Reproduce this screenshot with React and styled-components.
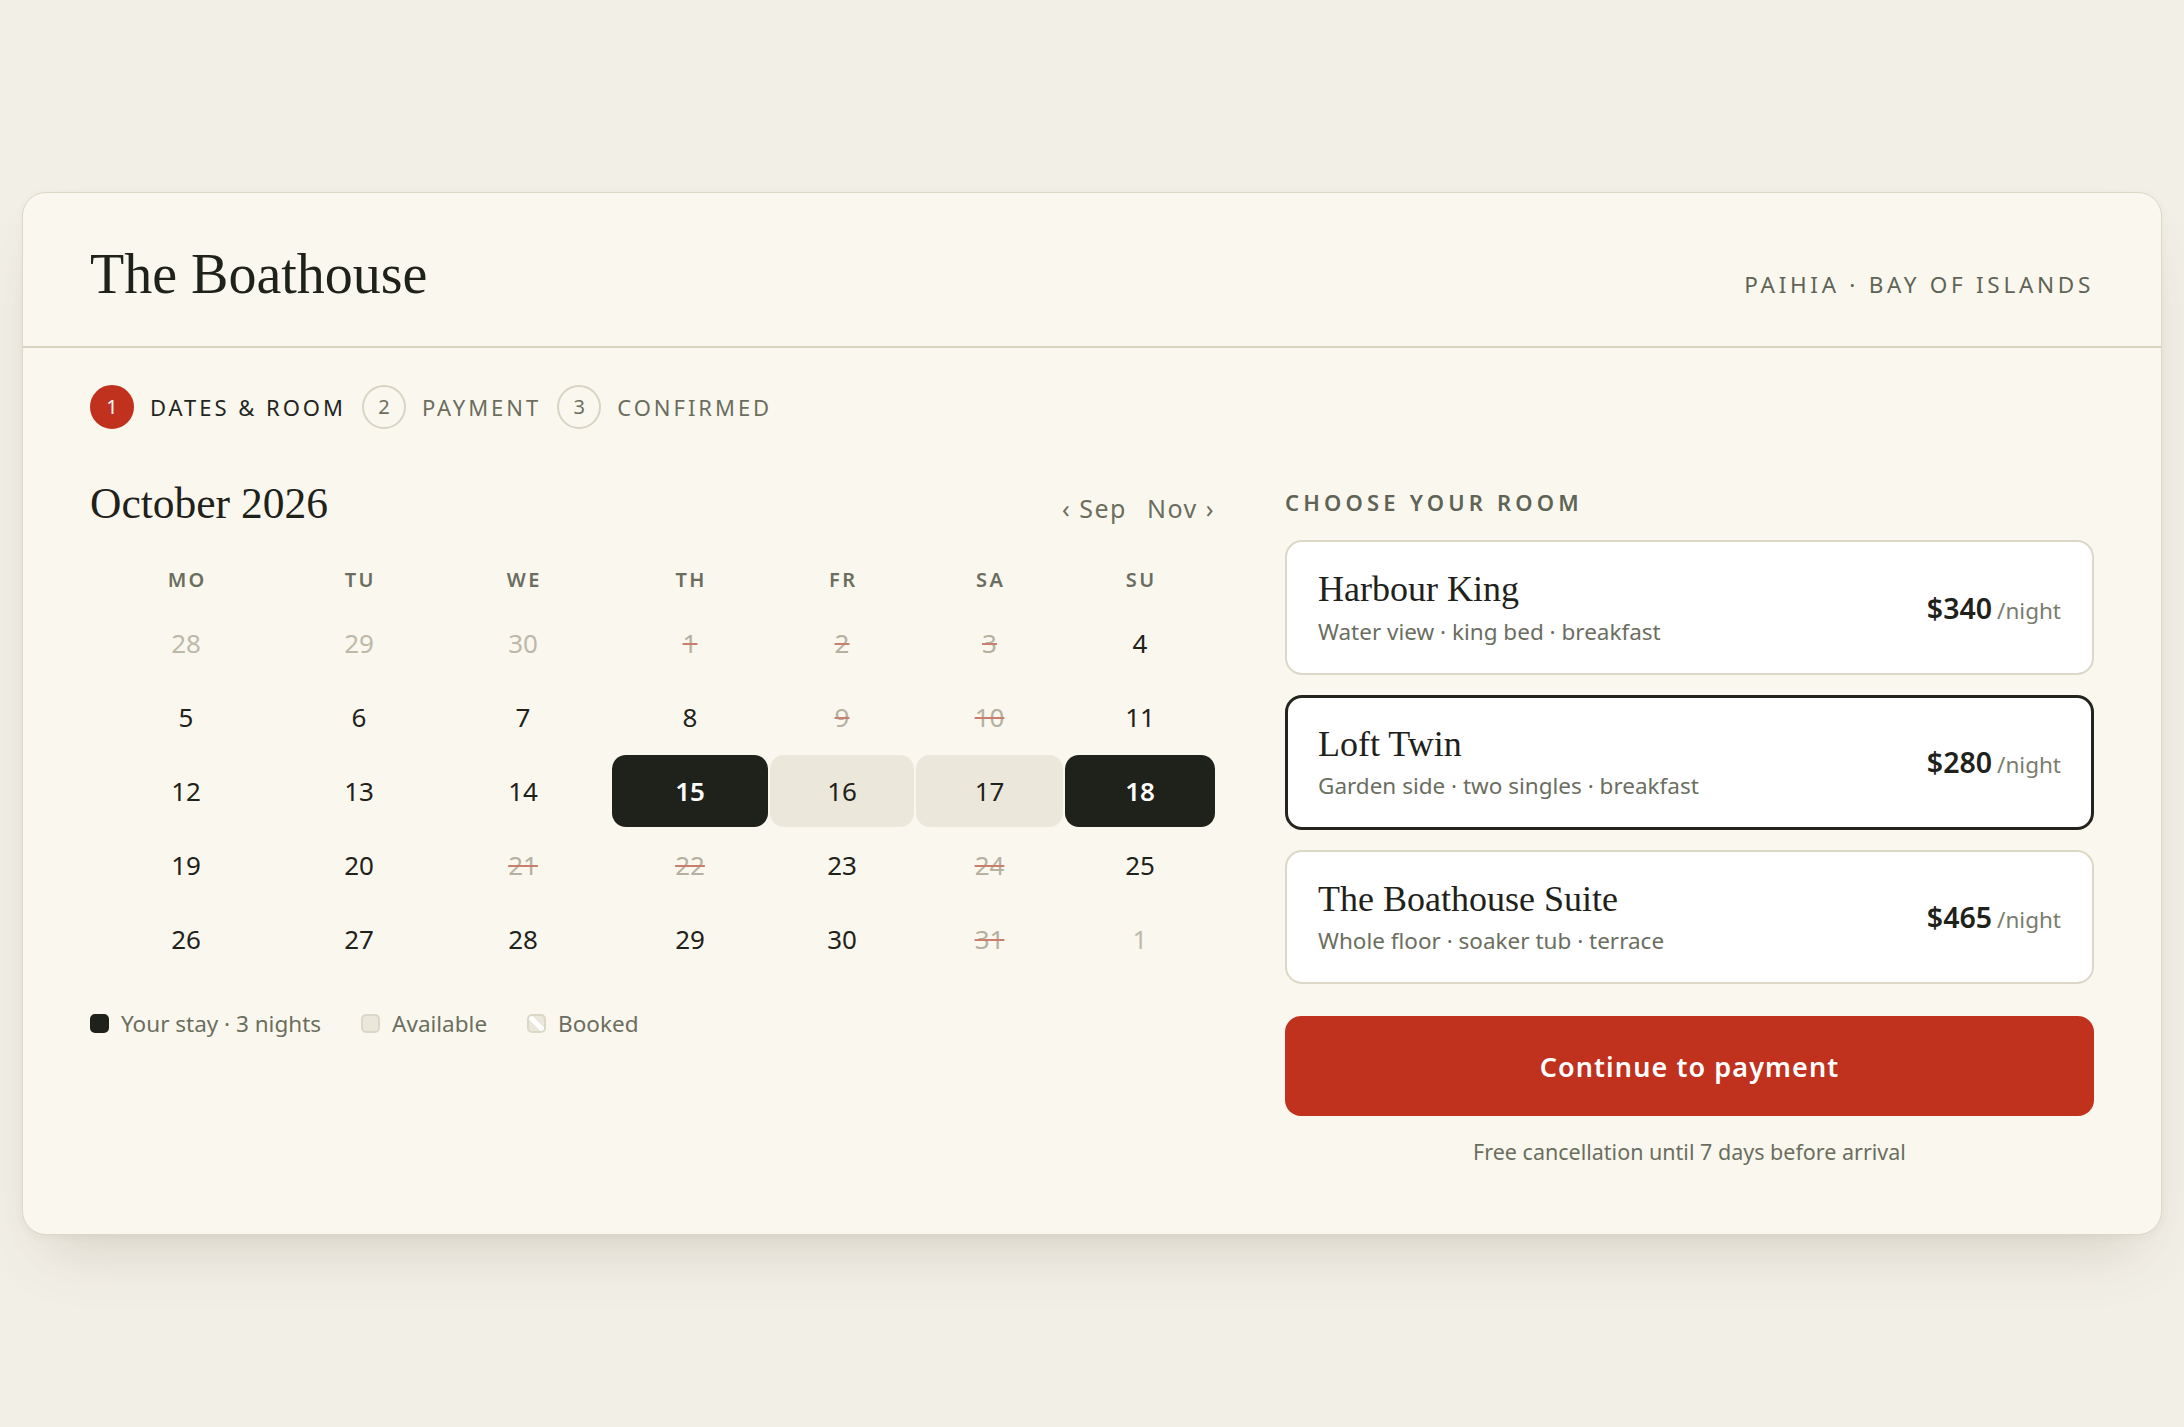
import React from "react";
import styled, { createGlobalStyle, css } from "styled-components";

const SANS = `"Noto Sans", "Open Sans", sans-serif`;
const SERIF = `"Liberation Serif", "Times New Roman", serif`;

const GlobalStyle = createGlobalStyle`
  *, *::before, *::after { box-sizing: border-box; }
  html, body { margin: 0; padding: 0; }
  body {
    background: #f2efe7;
    font-family: ${SANS};
    color: #1f211b;
  }
`;

const Shell = styled.main`
  min-height: 100vh;
  display: flex;
  align-items: center;
  justify-content: center;
  padding: 0 22px;
`;

const Card = styled.section`
  width: 100%;
  background: #faf8ee;
  border: 1px solid #dcd8c6;
  border-radius: 24px;
  box-shadow: 0 34px 60px -24px rgba(90, 80, 50, 0.2), 0 2px 8px rgba(90, 80, 50, 0.05);
`;

const Header = styled.header`
  display: flex;
  justify-content: space-between;
  align-items: baseline;
  padding: 48px 67px 37px;
  border-bottom: 2px solid #d8d4c1;
`;

const Title = styled.h1`
  margin: 0;
  font-family: ${SERIF};
  font-weight: 400;
  font-size: 56px;
  line-height: 1.2;
  color: #1f211b;
`;

const Location = styled.div`
  font-size: 22.5px;
  letter-spacing: 0.165em;
  color: #5f6456;
  text-transform: uppercase;
`;

const Body = styled.div`
  padding: 37px 67px 66px;
`;

const Stepper = styled.ol`
  display: flex;
  align-items: center;
  list-style: none;
  margin: 0;
  padding: 0;
`;

const Step = styled.li`
  display: flex;
  align-items: center;
  gap: 16px;
  margin-right: 16px;
  font-size: 22px;
  letter-spacing: 0.135em;
  text-transform: uppercase;
  color: ${(p) => (p.$active ? "#23251f" : "#6b6e5f")};
`;

const StepNum = styled.span`
  width: 44px;
  height: 44px;
  flex: none;
  border-radius: 50%;
  display: flex;
  align-items: center;
  justify-content: center;
  font-size: 20px;
  letter-spacing: 0;
  border: 2px solid ${(p) => (p.$active ? "#c0311e" : "#d8d4c4")};
  background: ${(p) => (p.$active ? "#c0311e" : "transparent")};
  color: ${(p) => (p.$active ? "#ffffff" : "#6b6e5f")};
`;

const Main = styled.div`
  display: grid;
  grid-template-columns: minmax(0, 1125fr) minmax(0, 809fr);
  column-gap: 70px;
  margin-top: 48px;
  align-items: start;
`;

const CalendarCol = styled.div`
  display: flex;
  flex-direction: column;
`;

const MonthBar = styled.div`
  display: flex;
  justify-content: space-between;
  align-items: baseline;
`;

const MonthTitle = styled.h2`
  margin: 0;
  font-family: ${SERIF};
  font-weight: 400;
  font-size: 43.5px;
  line-height: 1.2;
  color: #1f211b;
`;

const MonthNav = styled.div`
  display: flex;
  gap: 20px;
`;

const NavButton = styled.button`
  background: none;
  border: 0;
  padding: 0;
  font-family: ${SANS};
  font-size: 25px;
  letter-spacing: 0.06em;
  color: #6b6e5f;
  cursor: pointer;
`;

const CalGrid = styled.div`
  display: grid;
  grid-template-columns: 192fr 150fr 174fr 156fr 144fr 147fr 150fr;
  gap: 2px;
  margin-top: 26px;
`;

const DayName = styled.div`
  height: 50px;
  display: flex;
  align-items: center;
  justify-content: center;
  padding-left: 0.12em;
  font-size: 20px;
  font-weight: 600;
  letter-spacing: 0.12em;
  color: #6b6e5f;
`;

const dayVariants = {
  muted: css`
    color: #bdb8a9;
  `,
  booked: css`
    color: #b5b0a2;
    text-decoration: line-through;
    text-decoration-color: #c97f6d;
    text-decoration-thickness: 2px;
  `,
  open: css`
    color: #1f211b;
  `,
  edge: css`
    background: #1f211b;
    color: #ffffff;
    font-weight: 600;
  `,
  range: css`
    background: #ebe7da;
    color: #1f211b;
  `,
};

const DayCell = styled.div`
  height: 72px;
  display: flex;
  align-items: center;
  justify-content: center;
  border-radius: 14px;
  font-size: 26px;
  ${(p) => dayVariants[p.$kind]}
`;

const Legend = styled.div`
  display: flex;
  align-items: center;
  gap: 40px;
  margin-top: 33px;
  font-size: 22.5px;
  line-height: 1.4;
  color: #6b6e5f;
`;

const LegendItem = styled.span`
  display: flex;
  align-items: center;
  gap: 12px;
`;

const swatches = {
  stay: css`
    background: #1f211b;
    border: 2px solid #1f211b;
  `,
  available: css`
    background: #ebe7da;
    border: 2px solid #dcd8c8;
  `,
  booked: css`
    background: linear-gradient(45deg, #ebe7da 38%, #ffffff 38% 62%, #ebe7da 62%);
    border: 2px solid #dcd8c8;
  `,
};

const Swatch = styled.span`
  width: 19px;
  height: 19px;
  border-radius: 5px;
  flex: none;
  ${(p) => swatches[p.$kind]}
`;

const RoomCol = styled.div`
  display: flex;
  flex-direction: column;
`;

const RoomLabel = styled.h3`
  margin: 10px 0 0;
  font-size: 22px;
  font-weight: 600;
  line-height: 1.4;
  letter-spacing: 0.19em;
  text-transform: uppercase;
  color: #5f6456;
`;

const RoomList = styled.div`
  display: flex;
  flex-direction: column;
  gap: 20px;
  margin-top: 23px;
`;

const RoomCard = styled.button`
  display: flex;
  justify-content: space-between;
  align-items: center;
  width: 100%;
  text-align: left;
  background: #ffffff;
  border-radius: 17px;
  cursor: pointer;
  font-family: ${SANS};
  border: 2px solid #dcd8c8;
  padding: 26px 31px;
  ${(p) =>
    p.$selected &&
    css`
      border: 3px solid #23241e;
      padding: 25px 30px;
    `}
`;

const RoomInfo = styled.div`
  display: flex;
  flex-direction: column;
  gap: 4px;
`;

const RoomName = styled.div`
  font-family: ${SERIF};
  font-size: 36px;
  line-height: 1.2;
  color: #1f211b;
`;

const RoomMeta = styled.div`
  font-size: 22.5px;
  line-height: 1.4;
  color: #6b6e5f;
`;

const Price = styled.div`
  display: flex;
  align-items: baseline;
  gap: 5px;
`;

const Amount = styled.span`
  font-size: 28.5px;
  font-weight: 600;
  color: #1f211b;
`;

const PerNight = styled.span`
  font-size: 22.5px;
  color: #7a7c6e;
`;

const PrimaryButton = styled.button`
  margin-top: 32px;
  height: 100px;
  width: 100%;
  border: 0;
  border-radius: 16px;
  background: #c0311e;
  color: #ffffff;
  font-family: ${SANS};
  font-size: 27px;
  font-weight: 600;
  letter-spacing: 0.04em;
  cursor: pointer;
`;

const Note = styled.p`
  margin: 21px 0 0;
  text-align: center;
  font-size: 21.5px;
  line-height: 1.4;
  color: #6b6e5f;
`;

const DAY_NAMES = ["MO", "TU", "WE", "TH", "FR", "SA", "SU"];

const WEEKS = [
  [["28", "muted"], ["29", "muted"], ["30", "muted"], ["1", "booked"], ["2", "booked"], ["3", "booked"], ["4", "open"]],
  [["5", "open"], ["6", "open"], ["7", "open"], ["8", "open"], ["9", "booked"], ["10", "booked"], ["11", "open"]],
  [["12", "open"], ["13", "open"], ["14", "open"], ["15", "edge"], ["16", "range"], ["17", "range"], ["18", "edge"]],
  [["19", "open"], ["20", "open"], ["21", "booked"], ["22", "booked"], ["23", "open"], ["24", "booked"], ["25", "open"]],
  [["26", "open"], ["27", "open"], ["28", "open"], ["29", "open"], ["30", "open"], ["31", "booked"], ["1", "muted"]],
];

const ROOMS = [
  { name: "Harbour King", meta: "Water view · king bed · breakfast", price: "$340" },
  { name: "Loft Twin", meta: "Garden side · two singles · breakfast", price: "$280", selected: true },
  { name: "The Boathouse Suite", meta: "Whole floor · soaker tub · terrace", price: "$465" },
];

const STEPS = [
  { n: 1, label: "Dates & Room", active: true },
  { n: 2, label: "Payment" },
  { n: 3, label: "Confirmed" },
];

export default function App() {
  return (
    <>
      <GlobalStyle />
      <Shell>
        <Card>
          <Header>
            <Title>The Boathouse</Title>
            <Location>Paihia · Bay of Islands</Location>
          </Header>
          <Body>
            <Stepper>
              {STEPS.map((s) => (
                <Step key={s.n} $active={s.active}>
                  <StepNum $active={s.active}>{s.n}</StepNum>
                  {s.label}
                </Step>
              ))}
            </Stepper>
            <Main>
              <CalendarCol>
                <MonthBar>
                  <MonthTitle>October 2026</MonthTitle>
                  <MonthNav>
                    <NavButton>‹ Sep</NavButton>
                    <NavButton>Nov ›</NavButton>
                  </MonthNav>
                </MonthBar>
                <CalGrid>
                  {DAY_NAMES.map((d) => (
                    <DayName key={d}>{d}</DayName>
                  ))}
                  {WEEKS.flat().map(([day, kind], i) => (
                    <DayCell key={i} $kind={kind}>
                      {day}
                    </DayCell>
                  ))}
                </CalGrid>
                <Legend>
                  <LegendItem>
                    <Swatch $kind="stay" />
                    Your stay · 3 nights
                  </LegendItem>
                  <LegendItem>
                    <Swatch $kind="available" />
                    Available
                  </LegendItem>
                  <LegendItem>
                    <Swatch $kind="booked" />
                    Booked
                  </LegendItem>
                </Legend>
              </CalendarCol>
              <RoomCol>
                <RoomLabel>Choose your room</RoomLabel>
                <RoomList>
                  {ROOMS.map((r) => (
                    <RoomCard key={r.name} $selected={r.selected}>
                      <RoomInfo>
                        <RoomName>{r.name}</RoomName>
                        <RoomMeta>{r.meta}</RoomMeta>
                      </RoomInfo>
                      <Price>
                        <Amount>{r.price}</Amount>
                        <PerNight>/night</PerNight>
                      </Price>
                    </RoomCard>
                  ))}
                </RoomList>
                <PrimaryButton>Continue to payment</PrimaryButton>
                <Note>Free cancellation until 7 days before arrival</Note>
              </RoomCol>
            </Main>
          </Body>
        </Card>
      </Shell>
    </>
  );
}
